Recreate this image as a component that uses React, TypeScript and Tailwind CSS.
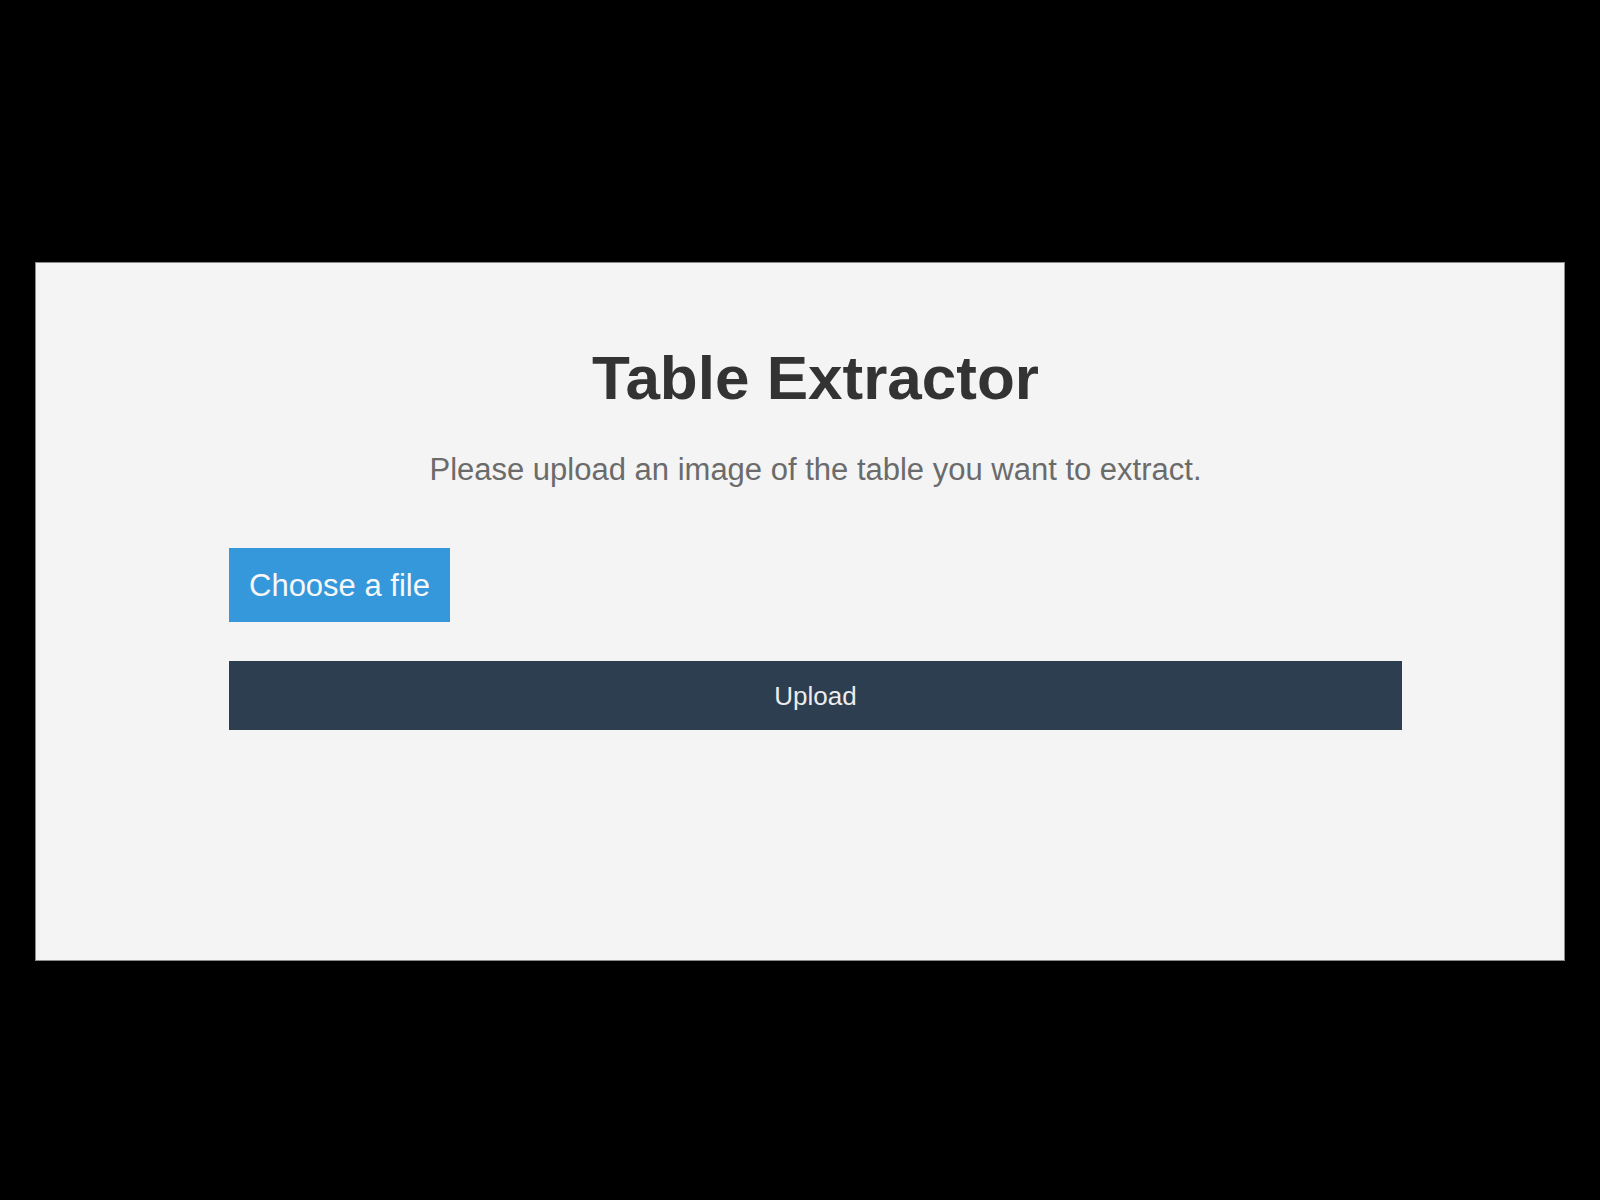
import React, { useState } from 'react';

const App = () => {
  const [fileName, setFileName] = useState<string>('');

  const handleFile = (e: React.ChangeEvent<HTMLInputElement>) => {
    const f = e.target.files?.[0];
    setFileName(f ? f.name : '');
  };

  return (
    <div className="min-h-[1200px] w-full bg-black pt-[262px] pl-[35px]" style={{ fontFamily: '"Liberation Sans", Arial, sans-serif' }}>
      <div className="w-[1530px] h-[699px] bg-[#f4f4f4] border border-[#8a8a8a] pl-[193px] pt-[84px]">
        <div className="w-[1173px] flex flex-col">
          <h1 className="text-center text-[62px] leading-[62px] font-bold text-[#333333]">Table Extractor</h1>
          <p className="mt-[45px] text-center text-[31px] leading-[31px] text-[#6b6b6b]">
            Please upload an image of the table you want to extract.
          </p>

          <form className="mt-[63px] flex flex-col" onSubmit={(e) => e.preventDefault()}>
            <div className="flex items-center gap-4">
              <label
                htmlFor="file"
                className="h-[74px] px-[20px] flex items-center bg-[#3498db] text-[#f7f7f7] text-[31px] leading-[31px] cursor-pointer"
              >
                Choose a file
              </label>
              <input id="file" type="file" accept="image/*" className="hidden" onChange={handleFile} />
              {fileName && <span className="text-[20px] text-[#6b6b6b]">{fileName}</span>}
            </div>

            <button
              type="submit"
              className="mt-[39px] h-[69px] w-full flex items-center justify-center bg-[#2c3e50] text-[#ececec] text-[26px] leading-[26px]"
            >
              Upload
            </button>
          </form>
        </div>
      </div>
    </div>
  );
};

export default App;
